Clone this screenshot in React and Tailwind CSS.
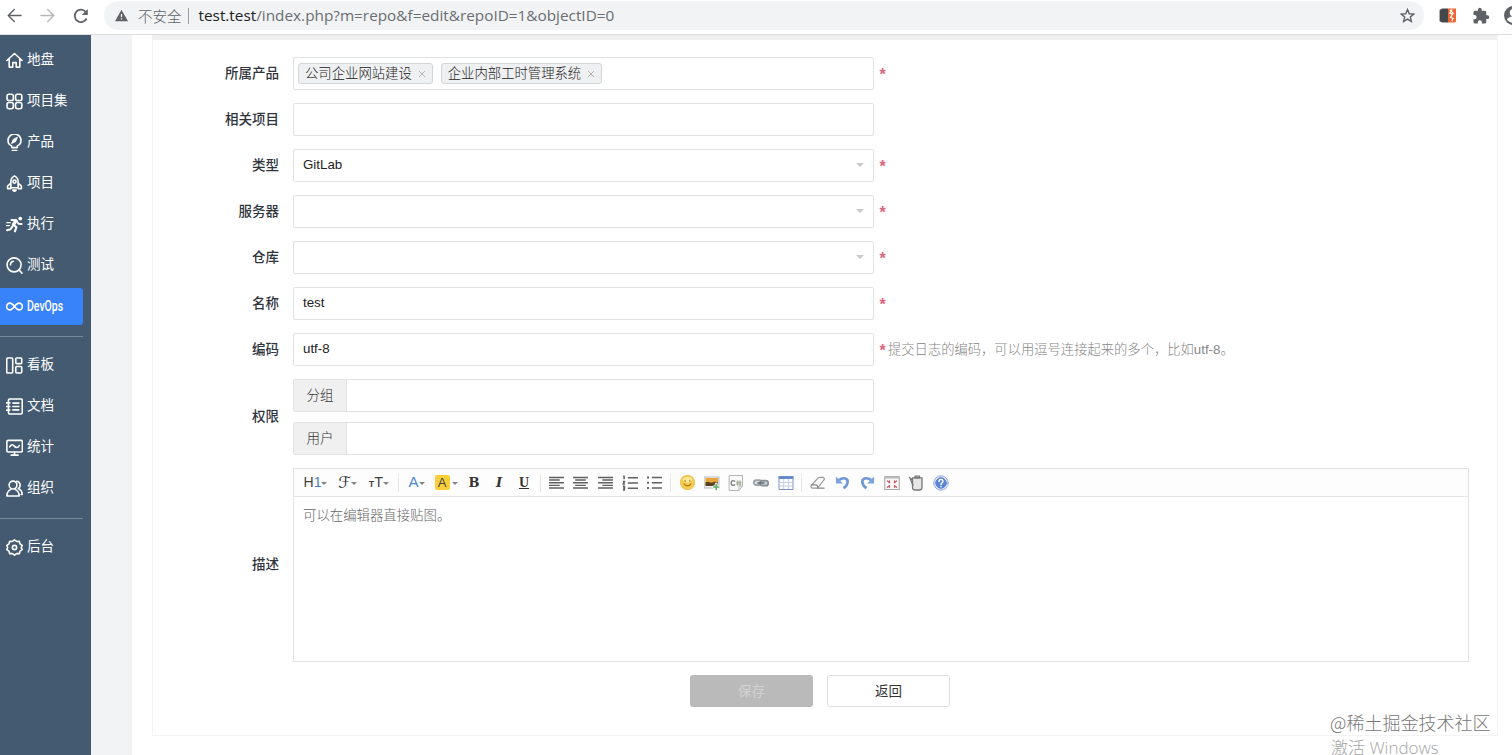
import clsx from "clsx";

const Svg = ({ children, className = "size-4", ...props }) => (
  <svg
    viewBox="0 0 16 16"
    fill="none"
    stroke="currentColor"
    strokeWidth="1.5"
    strokeLinecap="round"
    strokeLinejoin="round"
    className={clsx("shrink-0", className)}
    {...props}
  >
    {children}
  </svg>
);

// sidebar icons
const icons = {
  home: <path d="M.9 8 8 1.4 15.1 8M3 7v7.2h3.4V10h3.2v4.2H13V7" />,
  program: (
    <>
      <rect x="1" y="1.2" width="5.9" height="5.9" rx="1.8" />
      <rect x="9" y="1.2" width="5.9" height="5.9" rx="1.8" />
      <rect x="1" y="8.9" width="5.9" height="5.9" rx="1.8" />
      <rect x="9" y="8.9" width="5.9" height="5.9" rx="1.8" />
    </>
  ),
  product: (
    <>
      <path d="M5.4 11.2C3.200 10.300 1.900 8.300 1.900 6.100a6.100 6.100 0 0 1 12.200 0c0 2.200-1.300 4.200-3.500 5.100v1.600H5.400Z" />
      <path d="m10.600 3.400-1.600 3.800-3.800 1.700 1.700-3.800Z" fill="currentColor" strokeWidth=".8" />
      <path d="M5.900 15.600h4.200" strokeWidth="1.500" />
    </>
  ),
  project: (
    <>
      <path d="M4.600 12V6.200C4.600 3.600 6.400 1.600 8 .8c1.600.8 3.400 2.800 3.400 5.400V12ZM4.600 7.600 1.500 10.500v2.300h3.100M11.400 7.600l3.100 2.900v2.300h-3.100" />
      <circle cx="8" cy="6.200" r="1.500" />
      <path d="M6.400 14.200h3.200L8 15.600Z" fill="currentColor" />
    </>
  ),
  execution: (
    <>
      <circle cx="13.400" cy="2.400" r="1.800" fill="currentColor" stroke="none" />
      <path d="M5.200 3.800 9.400 4 7 8.200l2.800 2.200-1.400 4" strokeWidth="2" />
      <path d="m9.200 4.600-2.200 3.600" strokeWidth="3.200" />
      <path d="m10.200 4.800 1.500 2.600 3 .1M6 10l-1.700 2.500-3.300.9" strokeWidth="1.800" />
      <path d="M.8 6.300H4M.4 9h3" strokeWidth="1.200" />
    </>
  ),
  qa: (
    <>
      <circle cx="7.600" cy="7.400" r="6.600" />
      <path d="m12.300 12.300 2.700 2.900M4.200 7.400A3.500 3.500 0 0 1 6.800 4" />
    </>
  ),
  devops: (
    <path d="M8 8C6.600 6.200 5.500 4.800 3.800 4.800a3.200 3.200 0 0 0 0 6.400C5.500 11.200 6.600 9.800 8 8s2.500-3.200 4.200-3.200a3.200 3.200 0 0 1 0 6.400C10.500 11.200 9.400 9.800 8 8Z" />
  ),
  kanban: (
    <>
      <rect x=".7" y="1" width="5.600" height="14" rx=".8" />
      <rect x="9.200" y="1" width="5.600" height="5.200" rx=".8" />
      <rect x="9.200" y="9" width="5.600" height="6" rx=".8" />
    </>
  ),
  doc: (
    <>
      <rect x="2.300" y="1" width="13" height="14" rx="1.200" />
      <path d="M.6 4.600h3M.6 8h3M.6 11.400h3M6.500 4.800h5.600M6.500 8h5.600M6.500 11.200h5.600" />
    </>
  ),
  report: (
    <>
      <rect x=".8" y="1.300" width="14.600" height="11" rx="1.200" />
      <path d="M3.500 7.500c1.400-2.600 2.800-2.600 4.300-.8s3 1.900 4.700-.5M4.800 15.200h6.600M8 12.500v2" />
    </>
  ),
  team: (
    <>
      <circle cx="6.600" cy="4.800" r="3.700" />
      <path d="M.8 15c0-3.400 1.800-5.200 3.800-6.200M.8 15h11.600c0-3.400-1.800-5.200-3.800-6.200M10 1.200a3.700 3.700 0 0 1 1.600 6.800c2.200 1 3.600 3 3.600 5.700h-1" />
    </>
  ),
  admin: (
    <>
      <path d="m8 .8 2 1.500 2.500-.1.700 2.400 2 1.500L14.400 8l.8 2-2 1.500-.7 2.300-2.500-.1-2 1.500-2-1.500-2.500.1-.7-2.300-2-1.500.8-2-.8-1.900 2-1.500.7-2.400 2.500.1Z" />
      <circle cx="8" cy="8" r="2" />
    </>
  ),
};

const menu = [
  [
    { id: "home", label: "地盘" },
    { id: "program", label: "项目集" },
    { id: "product", label: "产品" },
    { id: "project", label: "项目" },
    { id: "execution", label: "执行" },
    { id: "qa", label: "测试" },
    { id: "devops", label: "DevOps", active: true },
  ],
  [
    { id: "kanban", label: "看板" },
    { id: "doc", label: "文档" },
    { id: "report", label: "统计" },
    { id: "team", label: "组织" },
  ],
  [{ id: "admin", label: "后台" }],
];

const BrowserBar = () => (
  <header className="flex h-[35px] shrink-0 items-center border-b border-[#dcdddd] bg-white pb-[3px] text-[#5f6368]">
    <Svg className="ml-[7px] size-[15px]">
      <path d="M15 8H1.500M7.800 1.500 1.300 8l6.500 6.500" />
    </Svg>
    <Svg className="ml-[18px] size-[15px] text-[#b5b7b9]">
      <path d="M1 8h13.500M8.200 1.500 14.700 8l-6.500 6.500" />
    </Svg>
    <Svg className="ml-[18px] size-4" strokeWidth="1.800" strokeLinecap="butt">
      <path d="M13.600 10.500A6.200 6.200 0 1 1 12.800 4" />
      <path d="M14.800 1v6h-6Z" fill="currentColor" stroke="none" />
    </Svg>
    <div className="ml-[15px] flex h-[29px] w-[1320px] items-center rounded-full bg-[#f1f3f4] pr-[9px] pl-[11px]">
      <Svg className="size-[13px]" stroke="none">
        <path d="M8 1 16 15H0Z" fill="currentColor" />
        <path d="M7.200 6h1.600v4H7.200ZM7.200 11.400h1.600V13H7.200Z" fill="#f1f3f4" />
      </Svg>
      <span className="ml-[10px] font-['Noto_Sans_CJK_SC',sans-serif] text-[14.500px] font-light whitespace-nowrap">
        不安全
      </span>
      <span className="ml-[6px] h-4 w-px bg-[#9a9da0]" />
      <span className="ml-[10px] flex-1 font-['Open_Sans',sans-serif] text-[15.330px] whitespace-nowrap text-[#6a6e72]">
        <span className="text-[#202124]">test.test</span>
        /index.php?m=repo&amp;f=edit&amp;repoID=1&amp;objectID=0
      </span>
      <Svg className="size-[15px]" strokeLinejoin="miter">
        <path d="m8 1.700 1.900 4.400 4.700.4L11 9.600l1.100 4.700L8 11.800l-4.100 2.500L5 9.600 1.400 6.500l4.700-.4Z" />
      </Svg>
    </div>
    <svg viewBox="0 0 18 16" className="ml-[15px] h-[15px] w-[18px] shrink-0">
      <path d="M0 2 3 .5h6v15H3L0 14Z" fill="#45484b" />
      <path d="M9 .5h8.500v14L16 15.500H9Z" fill="#ee6534" />
      <path d="m13.500 1.500-2.500 4 3 1-2.500 3.500 3 1-1.500 3M11 2l4 4" stroke="#fff" strokeWidth="1.200" fill="none" />
    </svg>
    <svg viewBox="0 0 24 24" className="ml-[15px] size-[18px] shrink-0" fill="currentColor">
      <path d="M20.500 11H19V7a2 2 0 0 0-2-2h-4V3.500a2.500 2.500 0 0 0-5 0V5H4a2 2 0 0 0-2 2v3.800h1.500a2.700 2.700 0 0 1 0 5.400H2V20a2 2 0 0 0 2 2h3.800v-1.500a2.700 2.700 0 0 1 5.400 0V22H17a2 2 0 0 0 2-2v-4h1.500a2.500 2.500 0 0 0 0-5Z" />
    </svg>
    <div className="ml-[14px] h-[19px] w-2 overflow-hidden">
      <svg viewBox="0 0 20 20" className="size-[19px]">
        <circle cx="10" cy="10" r="10" fill="#5f6368" />
        <circle cx="10" cy="7" r="4" fill="#fff" />
        <path d="M3 14c3-4 11-4 14 0-3 5-11 5-14 0Z" fill="#fff" />
      </svg>
    </div>
  </header>
);

const Sidebar = () => (
  <nav className="flex w-[91px] shrink-0 flex-col bg-[#435a71] pt-[7px] text-[13.500px] text-white">
    {menu.map((group, i) => (
      <div
        key={i}
        className={clsx("flex w-[83px] flex-col gap-1", i > 0 && "mt-[11px] border-t border-[#74889a] pt-[10px]")}
      >
        {group.map((item) => (
          <a
            key={item.id}
            className={clsx(
              "flex h-[37px] items-center gap-1 rounded-r-[3px] pb-px pl-[6px]",
              item.active && "bg-[#3883fa]"
            )}
          >
            <Svg className="size-[17px]">{icons[item.id]}</Svg>
            {item.active ? (
              <span className="origin-left scale-x-[0.7] pt-px font-[Roboto,sans-serif] text-[15px] font-medium">
                {item.label}
              </span>
            ) : (
              <span className="pt-px">{item.label}</span>
            )}
          </a>
        ))}
      </div>
    ))}
  </nav>
);

const Row = ({ label, children, required, hint }) => (
  <div className="flex items-center">
    <label className="w-[126px] pt-px text-right text-[13.500px] font-medium text-[#30343c]">{label}</label>
    <div className="ml-[14px]">{children}</div>
    {required && (
      <span className="ml-[3px] w-[11px] pt-[3px] text-center font-['Liberation_Sans',sans-serif] text-[16px] leading-none font-bold text-[#dc6480]">
        *
      </span>
    )}
    {hint && <span className="pt-px text-[13.300px] font-light text-[#858585]">{hint}</span>}
  </div>
);

const Field = ({ children, select }) => (
  <div className="flex h-[33px] w-[581px] items-center rounded-[2px] border border-[#e0e2e5] pr-[9px] pl-[9px] text-[13.300px] text-[#222]">
    <span className="flex-1 pb-px">{children}</span>
    {select && (
      <svg viewBox="0 0 8 4" className="mb-[2px] h-1 w-2" fill="#c9c9c9">
        <path d="M0 0h8L4 4Z" />
      </svg>
    )}
  </div>
);

const Tag = ({ children }) => (
  <span className="flex h-[21px] items-center rounded-[3px] border border-[#d3d6d9] bg-[#eff0f1] pr-[6px] pl-[6px] text-[13.350px] font-light whitespace-nowrap text-[#222]">
    <span className="pt-[2px]">{children}</span>
    <svg viewBox="0 0 8 8" className="mt-[2px] ml-[6px] size-2" stroke="#b5b5b5" strokeWidth="1">
      <path d="m1 1 6 6M7 1 1 7" />
    </svg>
  </span>
);

const Addon = ({ label }) => (
  <div className="flex h-[33px] w-[581px] rounded-[2px] border border-[#e0e2e5] text-[13.500px] font-light text-[#333]">
    <span className="flex w-[53px] items-center justify-center border-r border-[#e0e2e5] bg-[#f0f0f0] pt-px">
      {label}
    </span>
  </div>
);

const Caret = () => (
  <svg viewBox="0 0 6 3" className="mt-[2px] h-[3px] w-[6px]" fill="#858585">
    <path d="M0 0h6L3 3Z" />
  </svg>
);

const Sep = () => (
  <span className="flex w-[7.500px] justify-center">
    <span className="h-[18px] w-px bg-[#e6e6e6]" />
  </span>
);

const Cell = ({ children, className = "w-[24.650px]" }) => (
  <span className={clsx("flex items-center justify-center", className)}>{children}</span>
);

const tools = {
  left: <path d="M1 3.200h14M1 5.700h10M1 8.200h14M1 10.700h10M1 13.200h14" />,
  center: <path d="M1 3.200h14M3 5.700h10M1 8.200h14M3 10.700h10M1 13.200h14" />,
  right: <path d="M1 3.200h14M5 5.700h10M1 8.200h14M5 10.700h10M1 13.200h14" />,
  ordered: (
    <path d="M5.500 3.500H15M5.500 8.500H15M5.500 13.500H15M1 2h1v3M.8 7h1.700L1 9.500h1.700M.8 11.500h1.500v3.500H.8M1 13.200h1" />
  ),
  bullet: (
    <>
      <path d="M5.500 3.300H15M5.500 8.200H15M5.500 13.200H15" />
      <path d="M1 3.300h1.800M1 8.200h1.800M1 13.200h1.800" strokeWidth="2" />
    </>
  ),
};

const insertTools = [
  <Svg className="size-[15px]" stroke="none">
    <circle cx="8" cy="8" r="7.400" fill="#f8cc4a" stroke="#efc55e" />
    <ellipse cx="8" cy="5" rx="5" ry="3" fill="#fde995" />
    <path d="M5.500 5.500v1.500M10.500 5.500v1.500M4.300 9.500c2 2.800 5.400 2.800 7.400 0" stroke="#a87a28" strokeWidth="1.100" />
  </Svg>,
  <Svg className="size-4" stroke="none">
    <path d="M.5 2h14.500v11H.5Z" fill="#eee" stroke="#bbb" strokeWidth="1" />
    <path d="M1.500 3h12.500v8H1.500Z" fill="#e8a63a" />
    <path d="M1.500 7.500c3-2 5 1 7 0s4-1 5.500 0V11H1.500Z" fill="#594021" />
    <path d="M12.200 9v6M9.500 12h5.500" stroke="#fff" strokeWidth="3" />
    <path d="M12.200 9.500v5M9.700 12h5" stroke="#5fb06c" strokeWidth="1.700" />
  </Svg>,
  <Svg className="size-4" strokeWidth="1">
    <path d="M1.500.5h13V11L11 15.500H1.500Z" fill="#fafafa" stroke="#b5b5b5" />
    <path d="M14.500 11H11v4.500" stroke="#b5b5b5" />
    <path d="M6.700 6.200C4.500 5 3.200 6 3.200 8s1.500 3 3.500 1.800" stroke="#888" strokeWidth="1.500" />
    <path d="M9.700 5.800v4.500M12 5.800v4.500M8.500 7.200h4.600M8.500 9h4.600" stroke="#98a58c" />
  </Svg>,
  <Svg className="size-4">
    <rect x=".8" y="5.200" width="8" height="5" rx="2.500" fill="#d9dbdd" stroke="#9a9fa5" strokeWidth="1.700" />
    <rect x="7" y="5.700" width="8.200" height="5" rx="2.500" fill="#cfd2d5" stroke="#868b91" strokeWidth="1.700" />
    <path d="M5 8h6" stroke="#5e666f" />
  </Svg>,
  <Svg className="size-4" strokeWidth="1" strokeLinecap="butt">
    <path d="M1 1.500h14v13H1Z" fill="#fff" stroke="#7a93c0" />
    <path d="M1 1.500h14v2H1Z" fill="#5c85cb" stroke="#6c90cd" />
    <path d="M1 7.500h14M1 11h14M5.700 4v10M10.400 4v10" stroke="#c3d0e4" />
  </Svg>,
];

const editTools = [
  <Svg className="size-4" strokeWidth="1.200">
    <path d="M1.200 10.500 8 3.200c.6-.6 1-.8 1.800-.8h2.800c1.600 0 2.200 1.400 1.300 2.600l-6.400 8.200H3c-1.600 0-2.600-1.500-1.800-2.700Z" fill="#fafafa" stroke="#999" />
    <path d="M1.500 9.900h4.300c1.500 0 2.200 1.600 1.700 3.300M7.500 13.200H14" stroke="#888" />
  </Svg>,
  <Svg className="size-[15px]" stroke="#6f97d6" strokeWidth="2.800" strokeLinecap="butt">
    <path d="M4 5.500C9 2 14 3.500 13.500 7.500c-.3 3-2 5-4.500 6.500" />
    <path d="M1 1.500v7.500h7.500Z" fill="#7ba4df" stroke="none" />
  </Svg>,
  <Svg className="size-[15px]" stroke="#6f97d6" strokeWidth="2.800" strokeLinecap="butt">
    <path d="M12 5.500C7 2 2 3.500 2.500 7.500c.3 3 2 5 4.500 6.500" />
    <path d="M15 1.500v7.500H7.500Z" fill="#7ba4df" stroke="none" />
  </Svg>,
  <Svg className="size-4" strokeWidth="1.100">
    <path d="M.7 1.500h14.600v13H.7Z" fill="#f7f7f7" stroke="#aaa" />
    <path d="M1 2.500h14" stroke="#bbb" strokeWidth="2" />
    <path d="m3.500 6 2 1.700V6M12.500 6l-2 1.700V6M3.500 12.300l2-1.700v1.700M12.500 12.300l-2-1.700v1.700" stroke="#c9606a" strokeWidth="1.300" />
  </Svg>,
  <Svg className="size-4" strokeWidth="1.300">
    <path d="M4.500 2.800h9.500v9.500c0 1.500-1 2.700-2.500 2.700H7c-1.500 0-2.500-1-2.500-2.500Z" fill="#e6e6e6" stroke="#777" />
    <path d="M1.500 2.500 4 4.500M2 3l3 7.500M7 1.200h4.500v1.600H7Z" stroke="#777" />
  </Svg>,
  <Svg className="size-4" strokeWidth="1">
    <circle cx="8" cy="8" r="7.200" fill="#edf2fb" stroke="#8ea8da" />
    <circle cx="8" cy="8" r="5.300" fill="#5b84d1" stroke="#5b84d1" />
    <path d="M6 6.500c0-3 4.200-2.700 4 0C9.900 8 8 7.800 8 9.500M8 11.500v.3" stroke="#fff" strokeWidth="1.400" />
  </Svg>,
];

const Toolbar = () => (
  <div className="flex h-7 items-center border-b border-[#e3e5e8] bg-[#fdfdfd] pl-[5px] text-[#444]">
    <Cell className="w-8 pl-px font-['Liberation_Sans',sans-serif] text-[14px]">
      H<span className="text-[#4b7fc4]">1</span>
      <Caret />
    </Cell>
    <Cell className="w-8 pl-px text-[16px] text-[#333]">
      <span className="font-['DejaVu_Sans',sans-serif] leading-none">ℱ</span>
      <Caret />
    </Cell>
    <Cell className="w-8 font-['Liberation_Sans',sans-serif] text-[14.500px]">
      <span className="pt-1 text-[9px] font-bold">T</span>T<Caret />
    </Cell>
    <Sep />
    <Cell className="w-7 font-['Liberation_Sans',sans-serif] text-[15px] text-[#4a87d2]">
      A
      <Caret />
    </Cell>
    <Cell className="w-[31px] gap-[2px] font-['Liberation_Sans',sans-serif] text-[13px]">
      <span className="flex h-[15px] w-[15px] items-center justify-center rounded-[2px] bg-[#fbcf3b]">A</span>
      <Caret />
    </Cell>
    <Cell className="w-[25px] font-['DejaVu_Serif',serif] text-[13px] font-bold text-[#333]">B</Cell>
    <Cell className="w-[25px] font-['DejaVu_Serif',serif] text-[13px] font-bold text-[#333] italic">I</Cell>
    <Cell className="w-[25px] font-['Liberation_Serif',serif] text-[14px] font-bold text-[#333] underline">U</Cell>
    <Sep />
    {Object.keys(tools).map((name) => (
      <Cell key={name}>
        <Svg className="size-[17px] text-[#606060]" strokeWidth="1.400" strokeLinecap="butt">
          {tools[name]}
        </Svg>
      </Cell>
    ))}
    <Sep />
    {insertTools.map((icon, i) => (
      <Cell key={i}>{icon}</Cell>
    ))}
    <Sep />
    {editTools.map((icon, i) => (
      <Cell key={i}>{icon}</Cell>
    ))}
  </div>
);

const RepoForm = () => (
  <form className="flex h-[701px] w-[1346px] flex-col gap-[13px] border border-t-[5px] border-[#f3f3f3] border-t-[#efefef] bg-white pt-[17px]">
    <Row label="所属产品" required>
      <div className="flex h-[33px] w-[581px] items-center gap-2 rounded-[2px] border border-[#e0e2e5] pb-px pl-1">
        <Tag>公司企业网站建设</Tag>
        <Tag>企业内部工时管理系统</Tag>
      </div>
    </Row>
    <Row label="相关项目">
      <Field />
    </Row>
    <Row label="类型" required>
      <Field select>GitLab</Field>
    </Row>
    <Row label="服务器" required>
      <Field select />
    </Row>
    <Row label="仓库" required>
      <Field select />
    </Row>
    <Row label="名称" required>
      <Field>test</Field>
    </Row>
    <Row label="编码" required hint="提交日志的编码，可以用逗号连接起来的多个，比如utf-8。">
      <Field>utf-8</Field>
    </Row>
    <Row label="权限">
      <div className="flex flex-col gap-[10px]">
        <Addon label="分组" />
        <Addon label="用户" />
      </div>
    </Row>
    <Row label="描述">
      <div className="h-[194px] w-[1176px] border border-[#e0e2e5]">
        <Toolbar />
        <p className="px-[9px] pt-[9px] text-[13.400px] font-light text-[#666]">可以在编辑器直接贴图。</p>
      </div>
    </Row>
    <div className="ml-[537px] flex gap-[14px] text-[13.500px]">
      <button type="button" disabled className="h-8 w-[123px] rounded-[3px] bg-[#bababa] pt-[2px] text-[#d2d2d2]">
        保存
      </button>
      <button type="button" className="h-8 w-[123px] rounded-[3px] border border-[#dcdee0] pt-[2px] text-[#333]">
        返回
      </button>
    </div>
  </form>
);

const App = () => {
  return (
    <div className="relative flex h-[755px] w-[1512px] flex-col overflow-hidden bg-white font-['Liberation_Sans','Noto_Sans_CJK_SC',sans-serif]">
      <BrowserBar />
      <div className="flex min-h-0 flex-1">
        <Sidebar />
        <div className="w-[41px] shrink-0 bg-[#f2f3f4]" />
        <main className="flex-1 pl-5">
          <RepoForm />
        </main>
      </div>
      <div className="absolute top-[709px] left-[1330px] font-['Noto_Sans_CJK_SC',sans-serif] font-light whitespace-nowrap">
        <p className="text-[18px] leading-[27px] text-[#777]">@稀土掘金技术社区</p>
        <p className="pl-px font-['Open_Sans','Noto_Sans_CJK_SC',sans-serif] text-[17px] leading-[23px] text-[#a5a5a5]">
          激活 Windows
        </p>
      </div>
    </div>
  );
};

export default App;
